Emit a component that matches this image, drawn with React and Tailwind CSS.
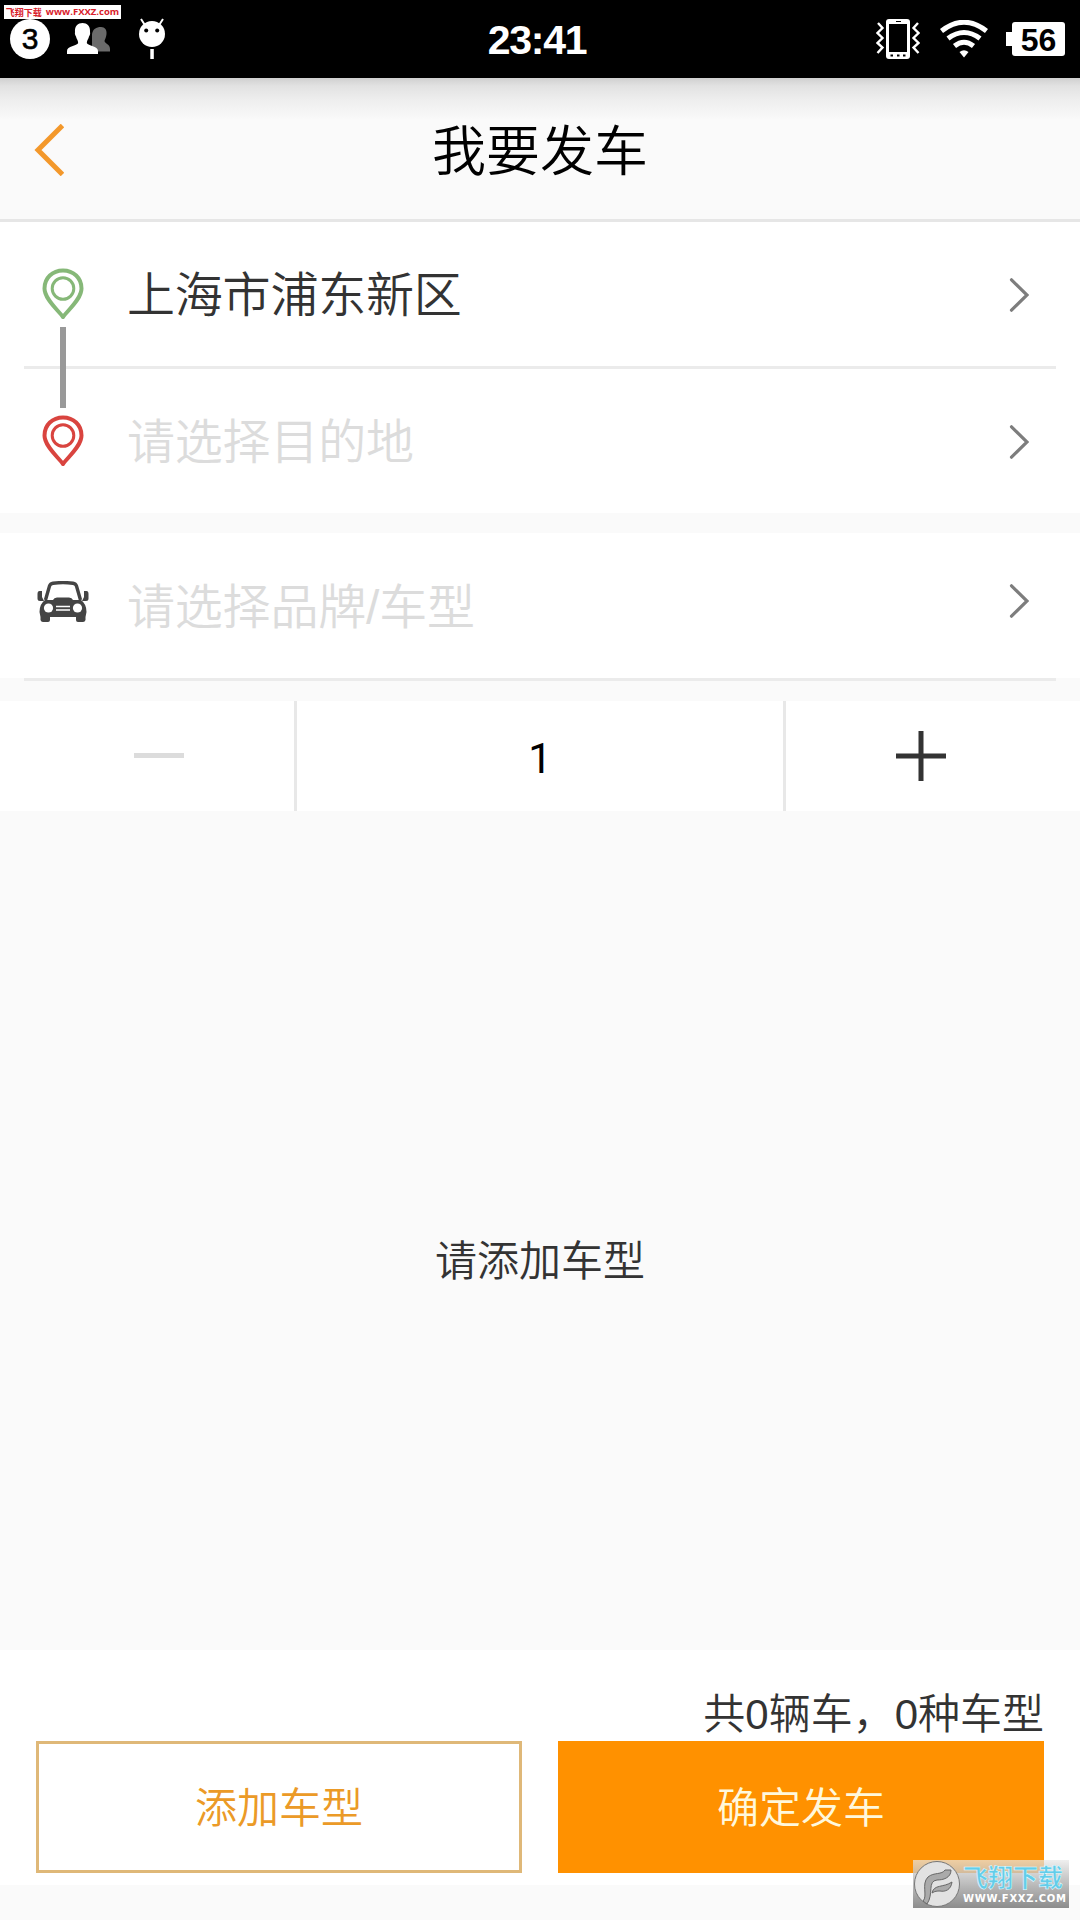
import { useState } from 'react';

const Chevron = () => (
  <svg className="w-5 h-9" viewBox="0 0 20 36" fill="none" stroke="#7d7d7d" strokeWidth="3.200" strokeLinecap="round">
    <path d="M2.500 2.800 L18 18 L2.500 33.200" />
  </svg>
);

const Pin = ({ color }) => (
  <svg className="w-[42px] h-[52px]" viewBox="0 0 42 52" fill="none" stroke={color}>
    <path
      d="M21 49 C16 42 2.500 31 2.500 20.500 C2.500 10 10.500 2.500 21 2.500 C31.500 2.500 39.500 10 39.500 20.500 C39.500 31 26 42 21 49 Z"
      strokeWidth="4"
      strokeLinejoin="round"
    />
    <circle cx="21" cy="20.500" r="10.800" strokeWidth="3" />
  </svg>
);

const CarIcon = () => (
  <svg className="w-[52px] h-[42px]" viewBox="0 0 52 42">
    <path d="M8.500 19 L12.500 5 Q13.300 2.500 16 2.200 Q26 1 36 2.200 Q38.700 2.500 39.500 5 L43.500 19" fill="none" stroke="#444" strokeWidth="3.400" />
    <path
      d="M8 19 L16 19 Q17 16.500 20 16.500 H32 Q35 16.500 36 19 L44 19 Q49.500 23 49.500 31 L48.500 36 V39 Q48 41 46 41 H41 Q39 41 39 39 V36 H13 V39 Q13 41 11 41 H6 Q4 41 3.500 39 V36 L2.500 31 Q2.500 23 8 19 Z"
      fill="#444"
    />
    <path d="M5 10 H2.500 Q0.500 10 0.500 13 V17.500 Q0.500 20 3 20 H7 L5 16 Z M47 10 H49.500 Q51.500 10 51.500 13 V17.500 Q51.500 20 49 20 H45 L47 16 Z" fill="#444" />
    <circle cx="11.500" cy="27" r="4.600" fill="#fff" />
    <circle cx="40.500" cy="27" r="4.600" fill="#fff" />
    <path d="M19 25.500 H33 M19 29 H33" stroke="#fff" strokeWidth="1.500" />
  </svg>
);

const StatusBar = () => (
  <div className="relative h-[78px] shrink-0 bg-black text-white flex items-center justify-between font-['Liberation_Sans',sans-serif]">
    {/* Notifications */}
    <div className="flex items-center pl-2.5 w-[400px]">
      <div className="w-10 h-10 rounded-full bg-white text-black text-[30px] leading-[39px] text-center font-medium [-webkit-text-stroke:0.6px_#000]">3</div>
      <svg className="w-11 h-8 ml-[17px]" viewBox="0 0 44 32">
        <path d="M34 4 C38 4 40 7 39.500 11 C39.300 14 38 16 37.500 18 C38 21 43 21 43 26 V28.500 H25 V11 C26 6 29 4 34 4 Z" fill="#6b6b6b" />
        <path d="M15.500 0 C20 0 23.500 3 23 9 C23.500 11 22.500 12.500 22 13.500 C21.500 16 20 17 19.800 20 C21 23 31 23 31 28 V31 H0 V28 C0 23 10 23 11.200 20 C11 17 9.500 16 9 13.500 C8.500 12.500 7.500 11 8 9 C7.500 3 11 0 15.500 0 Z" fill="#fff" />
      </svg>
      <svg className="w-7 h-11 ml-[27px]" viewBox="0 0 28 44">
        <path d="M3 2 L7.500 9 M25 2 L20.500 9" stroke="#fff" strokeWidth="2" />
        <circle cx="14" cy="17" r="13" fill="#fff" />
        <circle cx="8.200" cy="13.500" r="2" />
        <circle cx="19.200" cy="13.500" r="2" />
        <rect x="12.300" y="32" width="3.500" height="10" fill="#fff" />
      </svg>
    </div>
    <div className="text-[41px] font-bold tracking-[-1.300px] leading-none pt-0.5 pr-1.5">23:41</div>
    {/* Device state */}
    <div className="flex items-center justify-end pr-[15px] w-[400px]">
      <svg className="w-11 h-10" viewBox="0 0 44 40" fill="none">
        <rect x="10" y="0" width="24" height="40" rx="3" fill="#fff" />
        <rect x="13" y="5" width="18" height="28" fill="#000" />
        <path d="M20 2.500 H25" stroke="#000" />
        <path d="M14.500 36.500 H17 M21 36.500 H23.500 M27 36.500 H29.500" stroke="#000" strokeWidth="2" />
        <path d="M2 4 L6.500 9 L1.500 14 L6.500 19 L1.500 24 L6.500 28.500 L1.500 34 M42 4 L37.500 9 L42.500 14 L37.500 19 L42.500 24 L37.500 28.500 L42.500 34" stroke="#fff" strokeWidth="2.400" />
      </svg>
      <svg className="w-12 h-[38px] ml-5" viewBox="0 0 48 38" fill="none" stroke="#fff" strokeWidth="5">
        <path d="M1.500 11 Q24 -6.500 46.500 11" />
        <path d="M8 18.500 Q24 6.500 40 18.500" />
        <path d="M14.500 26 Q24 18.500 33.500 26" />
        <path d="M19.500 32 Q24 28.500 28.500 32 L24 37.500 Z" fill="#fff" stroke="none" />
      </svg>
      <div className="flex items-center ml-[18px]">
        <div className="w-1.5 h-3.5 bg-white" />
        <div className="w-[53px] h-[34px] rounded-[3px] bg-white text-black text-[32px] leading-[36px] font-bold text-center">56</div>
      </div>
    </div>
    {/* Site tag */}
    <div className="absolute left-1 top-[5px] w-[117px] h-3.5 bg-white text-[#d8202a] flex items-center justify-center gap-1 whitespace-nowrap font-bold leading-none">
      <span className="text-[9px] font-['Noto_Sans_CJK_SC',sans-serif]">飞翔下载</span>
      <span className="text-[9.5px] font-['Open_Sans',sans-serif]">www.FXXZ.com</span>
    </div>
  </div>
);

const Row = ({ icon, text, placeholder, iconClass = '', arrowClass = 'pt-0.5' }) => (
  <div className="h-36 shrink-0 bg-white flex items-center pl-[37px] pr-[51px]">
    <div className={`w-[52px] flex justify-center ${iconClass}`}>{icon}</div>
    <div className={`flex-1 pl-[38px] pt-[3px] text-[48px] leading-[60px] tracking-[-0.200px] ${text ? 'text-[#333]' : 'text-[#dcdcdc]'}`}>
      {text || placeholder}
    </div>
    <div className={arrowClass}><Chevron /></div>
  </div>
);

const Watermark = () => (
  <div className="absolute left-[913px] top-[1860px] w-[156px] h-12 flex items-center bg-gradient-to-b from-[#e8e8e8]/70 to-[#8c8c8c]">
    <svg className="w-12 h-12 shrink-0" viewBox="0 0 48 48">
      <circle cx="24" cy="24" r="22.500" fill="#e2e2e2" stroke="#777" />
      <path d="M10 41 C15 36 8 24 15 17 C21 12 29 15 32 10 L38 10 C38 18 30 20 24 20 C14 21 21 34 14 44 Z" fill="#aaa" stroke="#666" />
      <path d="M19 33 C21 24 30 28 39 22 C38 30 32 32 27 31 C24 31 22 31 19 33 Z" fill="#aaa" stroke="#666" />
    </svg>
    <div className="flex-1 flex flex-col pl-0.5 whitespace-nowrap">
      <span className="text-[25px] leading-[29px] font-bold text-[#62cdea] [-webkit-text-stroke:0.500px_#e8fbff]">飞翔下载</span>
      <span className="text-[10px] leading-[12px] font-bold text-white tracking-[0.700px] font-['DejaVu_Sans',sans-serif]">WWW.FXXZ.COM</span>
    </div>
  </div>
);

export default function App() {
  const [count, setCount] = useState(1);

  return (
    <div className="relative w-[1080px] h-[1920px] overflow-hidden bg-[#fafafa] flex flex-col font-[350] font-['Liberation_Sans','Noto_Sans_CJK_SC',sans-serif]">
      <StatusBar />

      {/* Header */}
      <header className="h-36 shrink-0 border-b-[3px] border-[#e6e6e6] bg-[linear-gradient(to_bottom,#d0d0d0_0,#e2e2e2_8px,#eeeeee_22px,#fafafa_42px)] grid grid-cols-3 items-center">
        <button className="pl-[34px] pt-0.5">
          <svg className="w-[30px] h-[52px]" viewBox="0 0 30 52" fill="none" stroke="#f3982b" strokeWidth="5">
            <path d="M28.500 1.500 L4 26 L28.500 50.500" />
          </svg>
        </button>
        <h1 className="pt-1.5 text-[54px] leading-[64px] text-black text-center">我要发车</h1>
      </header>

      {/* Route */}
      <section className="relative shrink-0 bg-white">
        <Row icon={<Pin color="#86b878" />} text="上海市浦东新区" iconClass="pr-px" />
        <div className="mx-6 h-[3px] bg-[#ebebeb]" />
        <Row icon={<Pin color="#d9443f" />} placeholder="请选择目的地" iconClass="pr-px" />
        <div className="absolute left-[60px] top-[105px] w-1.5 h-[81px] bg-[#999]" />
      </section>

      {/* Car model */}
      <section className="mt-5 shrink-0">
        <div className="h-px bg-white" />
        <Row icon={<CarIcon />} placeholder="请选择品牌/车型" iconClass="pb-2" arrowClass="pb-2.5" />
        <div className="mx-6 h-[3px] bg-[#ebebeb]" />
      </section>

      {/* Quantity */}
      <section className="mt-5 h-[110px] shrink-0 bg-white flex">
        <button className="w-[294px] flex items-center pl-[134px] pb-0.5" onClick={() => setCount(Math.max(1, count - 1))}>
          <span className="w-[50px] h-[5px] bg-[#dcdcdc]" />
        </button>
        <div className="flex-1 border-x-[3px] border-[#e8e8e8] flex items-center justify-center pt-1 text-[42px] text-black font-['Roboto',sans-serif] font-normal">
          {count}
        </div>
        <button className="w-[294px] flex items-center pl-[110px]" onClick={() => setCount(count + 1)}>
          <svg className="w-[50px] h-[50px]" viewBox="0 0 50 50" stroke="#333" strokeWidth="5">
            <path d="M0 25 H50 M25 0 V50" />
          </svg>
        </button>
      </section>

      <main className="flex-1 flex items-center justify-center pt-[62px] text-[42px] text-[#333]">请添加车型</main>

      {/* Summary and actions */}
      <footer className="h-[235px] mb-[35px] shrink-0 bg-white px-9 pt-9">
        <p className="h-[55px] leading-[57px] text-right text-[42px] text-[#333]">共0辆车，0种车型</p>
        <div className="flex justify-between text-[42px]">
          <button className="w-[486px] h-[132px] pt-0.5 border-[3px] border-[#dfb878] text-[#eb9a27]">添加车型</button>
          <button className="w-[486px] h-[132px] pt-0.5 bg-[#ff9100] text-[#fff8dc]">确定发车</button>
        </div>
      </footer>

      <Watermark />
    </div>
  );
}
